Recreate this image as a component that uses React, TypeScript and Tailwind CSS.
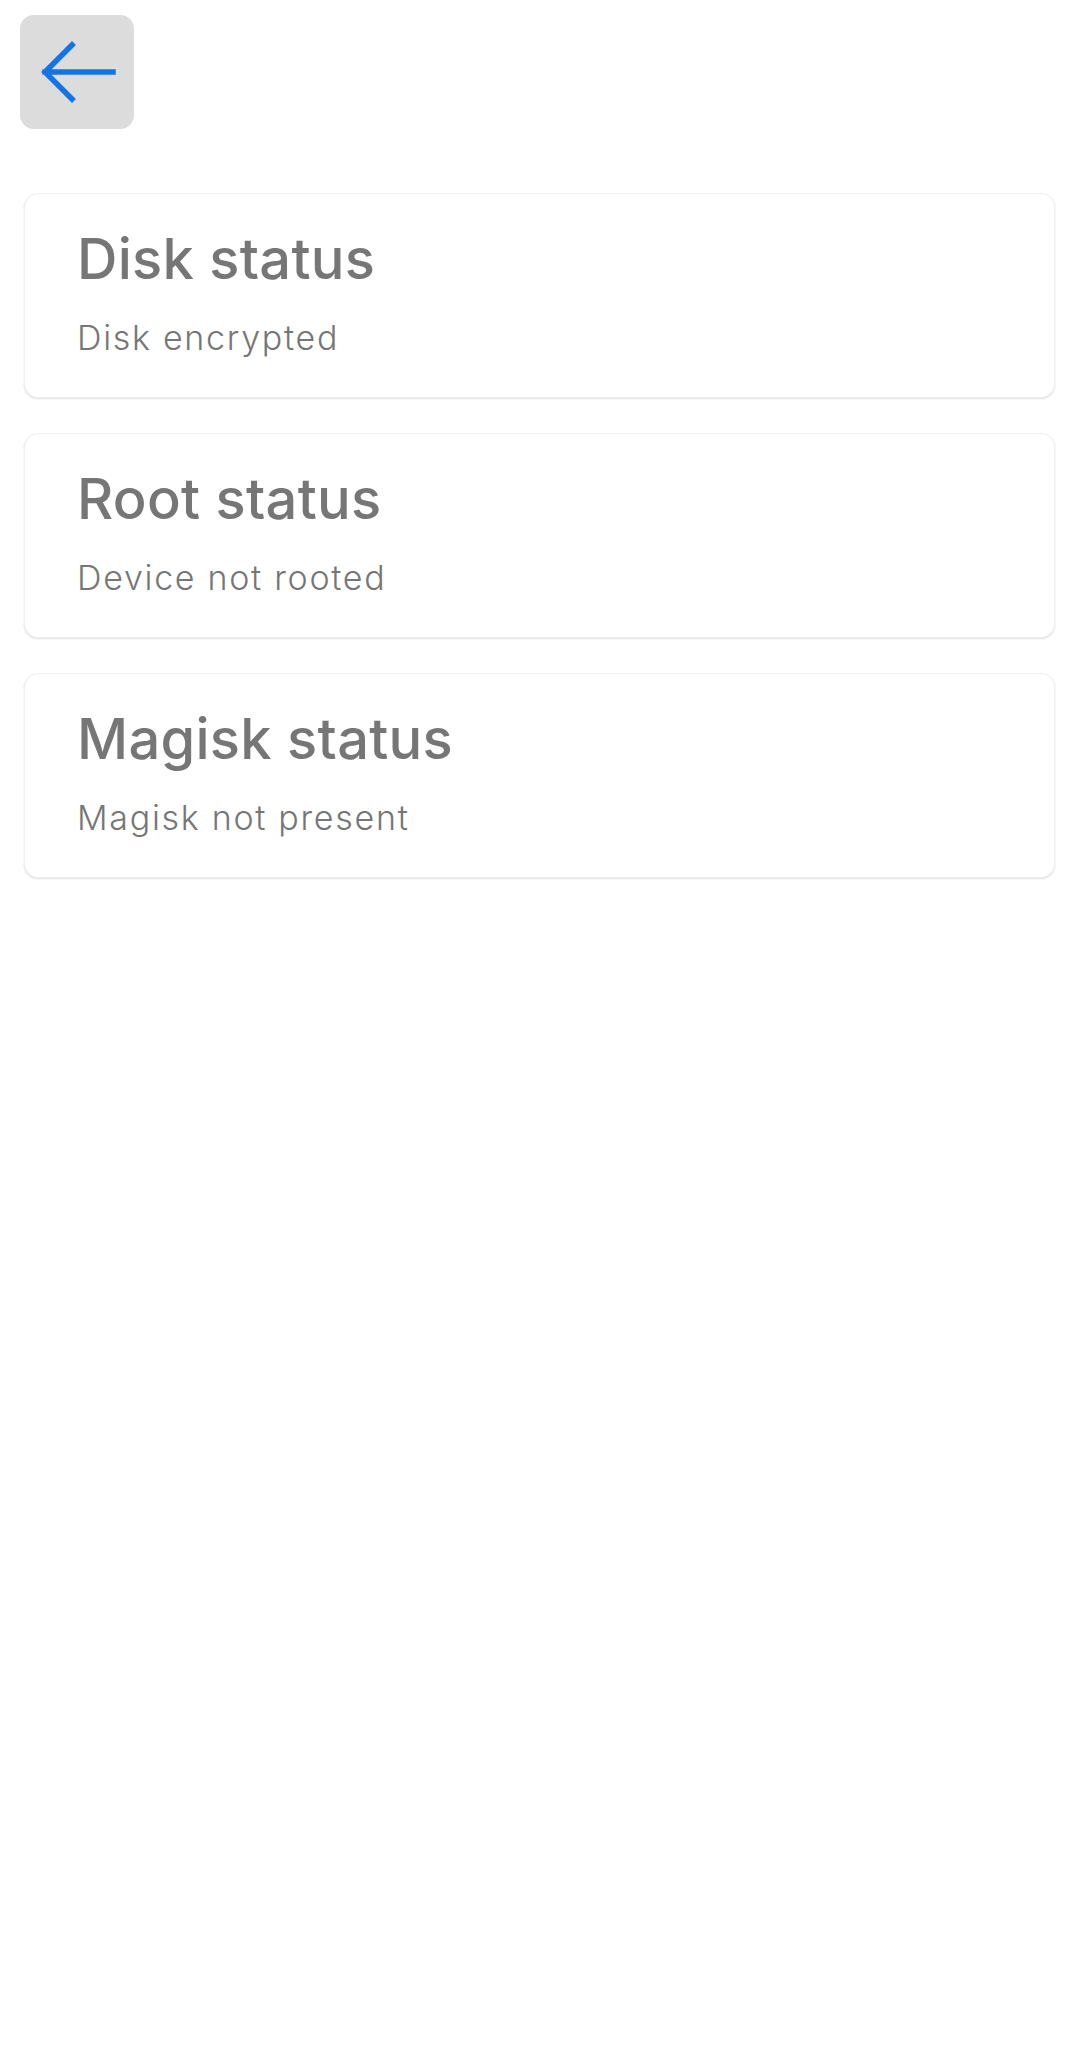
const cards = [
  { title: "Disk status", value: "Disk encrypted" },
  { title: "Root status", value: "Device not rooted" },
  { title: "Magisk status", value: "Magisk not present" },
];

function BackArrow() {
  return (
    <svg width="114" height="114" viewBox="0 0 114 114" fill="none">
      <path
        d="M93 57H25M52 30L25 57L52 84"
        stroke="#1473e6"
        strokeWidth="5.5"
        strokeLinecap="square"
      />
    </svg>
  );
}

export default function App() {
  return (
    <div className="min-h-[2056px] w-full bg-white font-['Inter',sans-serif]">
      <div className="pl-[20px] pt-[15px]">
        <button className="flex h-[114px] w-[114px] items-center justify-center rounded-[14px] bg-[#dcdcdc]">
          <BackArrow />
        </button>
      </div>
      <div className="ml-[24px] mr-[25px] mt-[64px] flex flex-col gap-[35px]">
        {cards.map((card) => (
          <div
            key={card.title}
            className="rounded-[14px] border border-[#efefef] bg-white pb-[39px] pl-[52px] pt-[32px] shadow-[0_1px_2px_rgba(0,0,0,0.13)]"
          >
            <div className="text-[56px] font-medium leading-[67px] tracking-[0.005em] text-[#767676]">
              {card.title}
            </div>
            <div className="mt-[25px] text-[34px] font-light leading-[40px] tracking-[0.05em] text-[#767676]">
              {card.value}
            </div>
          </div>
        ))}
      </div>
    </div>
  );
}
